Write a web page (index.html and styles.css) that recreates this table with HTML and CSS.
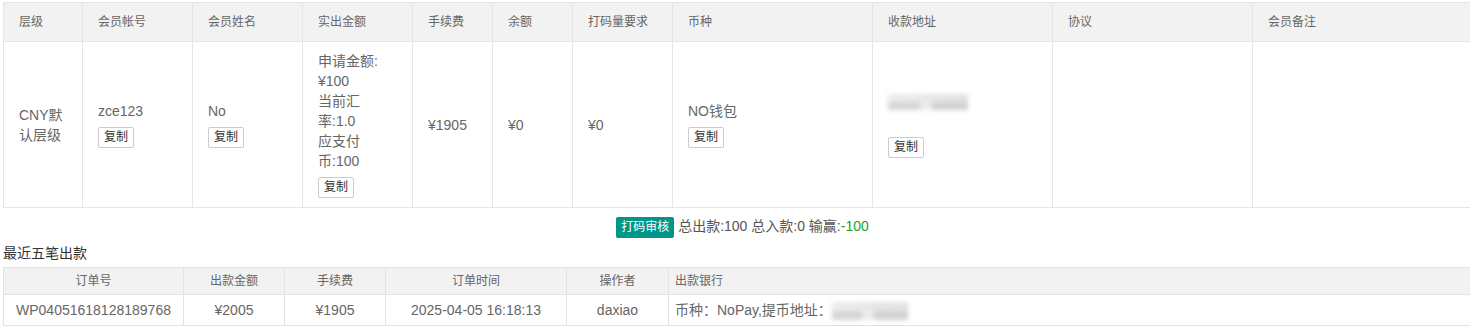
FILE: index.html
```html
<!DOCTYPE html>
<html lang="zh-CN">
<head>
    <meta charset="UTF-8">
    <meta name="viewport" content="width=device-width, initial-scale=1.0">
    <title>出款审核</title>
    <link rel="stylesheet" href="styles.css">
</head>
<body>
    <div class="page">
        <table class="info-table">
            <colgroup>
                <col style="width:79px">
                <col style="width:110px">
                <col style="width:110px">
                <col style="width:110px">
                <col style="width:80px">
                <col style="width:80px">
                <col style="width:100px">
                <col style="width:200px">
                <col style="width:180px">
                <col style="width:200px">
                <col>
            </colgroup>
            <thead>
                <tr>
                    <th>层级</th>
                    <th>会员帐号</th>
                    <th>会员姓名</th>
                    <th>实出金额</th>
                    <th>手续费</th>
                    <th>余额</th>
                    <th>打码量要求</th>
                    <th>币种</th>
                    <th>收款地址</th>
                    <th>协议</th>
                    <th>会员备注</th>
                </tr>
            </thead>
            <tbody>
                <tr>
                    <td>CNY默认层级</td>
                    <td>zce123<button class="copy-btn">复制</button></td>
                    <td>No<button class="copy-btn">复制</button></td>
                    <td class="amount-cell">申请金额:<br>¥100<br>当前汇率:1.0<br>应支付币:100<button class="copy-btn">复制</button></td>
                    <td>¥1905</td>
                    <td>¥0</td>
                    <td>¥0</td>
                    <td>NO钱包<button class="copy-btn">复制</button></td>
                    <td><span class="masked"></span><br>&nbsp;<button class="copy-btn">复制</button></td>
                    <td></td>
                    <td></td>
                </tr>
            </tbody>
        </table>

        <div class="summary">
            <span class="badge">打码审核</span> 总出款:100 总入款:0 输赢:<span class="win">-100</span>
        </div>

        <div class="section-title">最近五笔出款</div>
        <table class="recent-table">
            <colgroup>
                <col style="width:180px">
                <col style="width:101px">
                <col style="width:101px">
                <col style="width:181px">
                <col style="width:102px">
                <col>
            </colgroup>
            <thead>
                <tr>
                    <th>订单号</th>
                    <th>出款金额</th>
                    <th>手续费</th>
                    <th>订单时间</th>
                    <th>操作者</th>
                    <th class="left">出款银行</th>
                </tr>
            </thead>
            <tbody>
                <tr>
                    <td>WP04051618128189768</td>
                    <td>¥2005</td>
                    <td>¥1905</td>
                    <td>2025-04-05 16:18:13</td>
                    <td>daxiao</td>
                    <td class="left">币种：NoPay,提币地址：<span class="masked masked-wide"></span></td>
                </tr>
            </tbody>
        </table>
    </div>
</body>
</html>
```

FILE: styles.css
```css
body {
    font-family: 'Liberation Sans', 'Noto Sans CJK SC', sans-serif;
    margin: 0;
    background-color: #fff;
    color: #666;
    overflow: hidden;
}

.page {
    padding: 2px 0 0 3px;
}

table {
    border-collapse: collapse;
    table-layout: fixed;
    width: 1468px;
}

/* main record table */
.info-table th,
.info-table td {
    border: 1px solid #e6e6e6;
    padding: 9px 15px;
    line-height: 20px;
    text-align: left;
    vertical-align: middle;
    font-size: 14px;
    color: #666;
}

.info-table th {
    background-color: #f2f2f2;
    font-weight: normal;
    font-size: 12px;
}

.info-table .amount-cell {
    padding-right: 18px;
}

.copy-btn {
    display: block;
    margin: 6px 0 0;
    height: 21px;
    padding: 0 5px;
    font-family: inherit;
    font-size: 12px;
    line-height: 19px;
    color: #333;
    background-color: #fff;
    border: 1px solid #ccc;
    border-radius: 2px;
    cursor: pointer;
}

.masked {
    display: inline-block;
    width: 80px;
    height: 16px;
    vertical-align: middle;
    background:
        linear-gradient(to right, #d6d6d6 0 40%, #ececec 40% 55%, #d2d2d2 55% 100%) bottom / 100% 50% no-repeat,
        linear-gradient(to right, #ececec, #e2e2e2) top / 100% 50% no-repeat;
    filter: blur(2px);
}

.masked-wide {
    width: 76px;
    height: 18px;
}

/* totals line */
.summary {
    margin-top: 7px;
    padding-left: 12px;
    text-align: center;
    font-size: 14px;
    line-height: 22px;
    color: #555;
}

.badge {
    display: inline-block;
    height: 21px;
    line-height: 21px;
    padding: 0 5px;
    font-size: 12px;
    color: #fff;
    background-color: #009688;
    border-radius: 2px;
    vertical-align: middle;
}

.win {
    color: #1e9e1e;
}

.section-title {
    margin-top: 5px;
    font-size: 14px;
    line-height: 20px;
    color: #333;
}

/* recent payouts */
.recent-table {
    margin-top: 4px;
}

.recent-table th,
.recent-table td {
    border: 1px solid #e2e2e2;
    text-align: center;
    line-height: 20px;
    color: #666;
}

.recent-table th {
    background-color: #f2f2f2;
    font-weight: normal;
    font-size: 12px;
    padding: 3px 6px;
}

.recent-table td {
    font-size: 14px;
    padding: 5px 6px;
}

.recent-table .left {
    text-align: left;
}
```
